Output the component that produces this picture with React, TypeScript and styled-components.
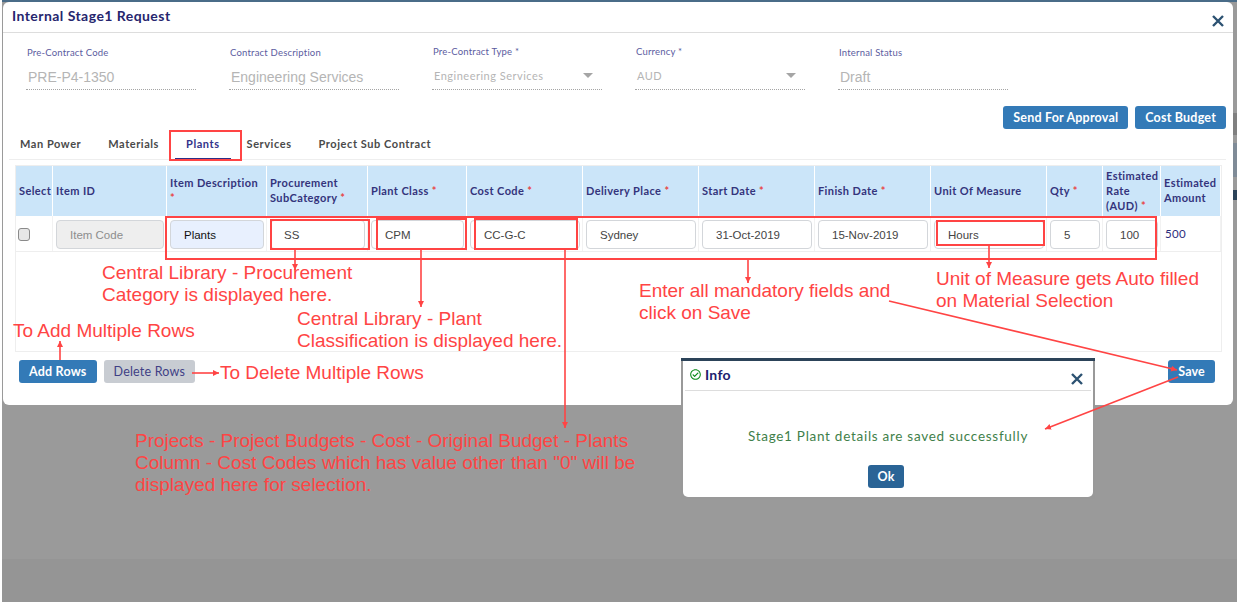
import * as React from "react";
import styled, { createGlobalStyle } from "styled-components";
import { FaRegCheckCircle } from "react-icons/fa";

const GlobalStyle = createGlobalStyle`
  html, body {
    margin: 0;
    padding: 0;
    background: #fff;
  }
  * {
    box-sizing: border-box;
  }
`;

const RED = "#ff4444";
const UI_FONT = `Lato, "Open Sans", sans-serif`;
const VALUE_FONT = `"Liberation Sans", Arial, sans-serif`;

const Page = styled.div`
  position: relative;
  width: 1237px;
  height: 602px;
  overflow: hidden;
  padding-left: 2px;
  font-family: ${UI_FONT};
`;

const Backdrop = styled.div`
  height: 602px;
  padding: 2px 4px 0 1px;
  background: linear-gradient(#4a6c88 0 2px, #9a9a9a 2px 559px, #959595 559px);
`;

// bits of the page behind the modal that show in the gap on the right
const RightEdge = styled.div`
  position: absolute;
  right: 0;
  top: 0;
  width: 4px;
  height: 210px;
  background: linear-gradient(
    #4a6c88 0 2px,
    #9a9a9a 2px 113px,
    #808080 113px 135px,
    #9a9a9a 135px 143px,
    #7f8b97 143px 177px,
    #9a9a9a 177px 190px,
    #2c4359 190px 200px,
    #9a9a9a 200px
  );
`;

const Modal = styled.div`
  position: relative;
  height: 403px;
  background: #fff;
  border-radius: 6px;
`;

const ModalHeader = styled.div`
  height: 31px;
  display: flex;
  align-items: center;
  justify-content: space-between;
  padding: 0 9px 0 9px;
  border-bottom: 1px solid #ddd;
`;

const ModalTitle = styled.div`
  font-size: 14px;
  font-weight: 700;
  letter-spacing: 0.45px;
  color: #26266e;
  margin-top: -4px;
`;

const CloseIcon = styled.svg<{ $size: number; $drop: number }>`
  width: ${(p) => p.$size}px;
  height: ${(p) => p.$size}px;
  margin-top: ${(p) => p.$drop}px;
  stroke: #2c5272;
  stroke-width: 2.4;
  fill: none;
`;

const FieldRow = styled.div`
  display: flex;
  gap: 33px;
  margin-top: 14px;
  padding-left: 23px;
`;

const Field = styled.div`
  position: relative;
  width: 170px;
  height: 43px;
  padding-left: 1px;
  border-bottom: 1px dotted #a5a5a5;
`;

const FieldLabel = styled.div<{ $raised?: boolean }>`
  font-size: 9.5px;
  line-height: 12px;
  letter-spacing: 0.2px;
  color: #5c5ca0;
  margin-top: ${(p) => (p.$raised ? "-1px" : "0")};
`;

const FieldValue = styled.div<{ $select?: boolean }>`
  font-family: ${(p) => (p.$select ? UI_FONT : VALUE_FONT)};
  font-size: ${(p) => (p.$select ? "11px" : "14px")};
  letter-spacing: ${(p) => (p.$select ? "0.5px" : "0")};
  line-height: 16px;
  color: #b5b5b5;
  margin-top: 10px;
  padding-left: 1px;
`;

const Caret = styled.span`
  position: absolute;
  right: 9px;
  top: 26px;
  border-left: 5px solid transparent;
  border-right: 5px solid transparent;
  border-top: 5px solid #a5a5a5;
`;

const ActionRow = styled.div`
  display: flex;
  justify-content: flex-end;
  gap: 7px;
  margin-top: 16px;
  padding-right: 7px;
`;

const Button = styled.div<{ $variant?: "primary" | "muted" | "dark" }>`
  height: 23px;
  display: inline-flex;
  align-items: center;
  justify-content: center;
  padding: 0 ${(p) => (p.$variant === "dark" ? "9px" : "10px")};
  border-radius: 3px;
  font-size: 12.5px;
  font-weight: ${(p) => (p.$variant === "muted" ? 400 : 700)};
  letter-spacing: 0.2px;
  color: ${(p) => (p.$variant === "muted" ? "#3f3f85" : "#fff")};
  background: ${(p) =>
    p.$variant === "muted"
      ? "#c8ccd2"
      : p.$variant === "dark"
        ? "#2a6496"
        : "#337ab7"};
`;

const Tabs = styled.div`
  display: flex;
  gap: 5px;
  height: 29px;
  margin: 2px 7px 0 6px;
  border-bottom: 1px solid #eee;
`;

const Tab = styled.div<{ $active?: boolean }>`
  padding: 0 11px;
  height: 28px;
  line-height: 26px;
  font-size: 11px;
  font-weight: 700;
  letter-spacing: 0.56px;
  color: ${(p) => (p.$active ? "#33338a" : "#4a4a4a")};
  border-bottom: 1px solid ${(p) => (p.$active ? "#2e2e86" : "transparent")};
`;

const TableFrame = styled.div`
  height: 187px;
  margin: 5px 11px 0 12px;
  border: 1px solid #eee;
`;

const COLUMNS = "37px 114px 100px 101px 99px 116px 116px 116px 116px 116px 56px 58px 60px";

const HeadRow = styled.div`
  display: grid;
  grid-template-columns: ${COLUMNS};
  height: 50px;
`;

const HeadCell = styled.div`
  display: flex;
  align-items: center;
  padding: 0 0 2px 3px;
  background: #cbe5f9;
  border-right: 1px solid #fff;
  font-size: 11px;
  font-weight: 700;
  line-height: 15px;
  letter-spacing: 0.4px;
  color: #34347c;
`;

const Star = styled.span`
  color: #e84545;
`;

const BodyRow = styled.div`
  display: grid;
  grid-template-columns: ${COLUMNS};
  height: 36px;
  border-bottom: 1px solid #eee;
`;

const BodyCell = styled.div`
  display: flex;
  align-items: flex-start;
  padding: 4px 2px 0 3px;
  border-right: 1px solid #f2f2f2;
`;

const Checkbox = styled.div`
  width: 12px;
  height: 13px;
  margin: 8px 0 0 -1px;
  border: 1px solid #8a8a8a;
  border-radius: 3px;
  background: #e6e6e6;
`;

const InputBox = styled.div<{ $tone?: "disabled" | "filled" | "plain" }>`
  width: 100%;
  height: 29px;
  line-height: 29px;
  padding-left: 13px;
  border: 1px solid #d3d6da;
  border-radius: 4px;
  font-family: ${VALUE_FONT};
  font-size: 11.5px;
  color: ${(p) => (p.$tone === "disabled" ? "#8d8d8d" : p.$tone === "filled" ? "#111" : "#444")};
  background: ${(p) => (p.$tone === "disabled" ? "#eeeeee" : p.$tone === "filled" ? "#e8f0fe" : "#fff")};
`;

const AmountText = styled.div`
  margin-top: 7px;
  padding-left: 1px;
  font-size: 11.5px;
  letter-spacing: 0.3px;
  color: #2d2d7d;
`;

const Footer = styled.div`
  display: flex;
  justify-content: space-between;
  margin-top: 8px;
  padding: 0 18px 0 16px;
`;

const FooterLeft = styled.div`
  display: flex;
  gap: 7px;
`;

const InfoDialog = styled.div`
  position: absolute;
  left: 681px;
  top: 358px;
  width: 414px;
  height: 141px;
  padding: 3px 2px 2px;
  background: linear-gradient(#2c4359 0 3px, #999 3px);
`;

const InfoPanel = styled.div`
  height: 100%;
  display: flex;
  flex-direction: column;
  background: #fff;
  border-radius: 0 0 5px 5px;
`;

const InfoHeader = styled.div`
  height: 30px;
  margin: 0 2px;
  display: flex;
  align-items: center;
  justify-content: space-between;
  padding: 0 8px 0 5px;
  border-bottom: 1px solid #ddd;
`;

const InfoTitle = styled.div`
  display: flex;
  align-items: center;
  gap: 4px;
  margin-top: -3px;
  font-size: 14px;
  font-weight: 700;
  letter-spacing: 0.3px;
  color: #20206e;
  svg {
    color: #0b8a1a;
    font-size: 11px;
  }
`;

const InfoMessage = styled.div`
  margin-top: 37px;
  text-align: center;
  font-size: 13.5px;
  letter-spacing: 0.72px;
  color: #3f7f4a;
`;

const InfoActions = styled.div`
  display: flex;
  justify-content: center;
  margin-top: 21px;
  padding-right: 4px;
`;

const Annotations = styled.svg`
  position: absolute;
  left: 0;
  top: 0;
  pointer-events: none;
`;

const Note = styled.div<{ $x: number; $y: number }>`
  position: absolute;
  left: ${(p) => p.$x}px;
  top: ${(p) => p.$y}px;
  font-family: ${VALUE_FONT};
  font-size: 19px;
  line-height: 22px;
  white-space: nowrap;
  color: ${RED};
`;

const Close = ({ size, drop }: { size: number; drop: number }) => (
  <CloseIcon $size={size} $drop={drop} viewBox="0 0 12 12">
    <path d="M1 1l10 10M11 1L1 11" />
  </CloseIcon>
);

const fields = [
  { label: "Pre-Contract Code", value: "PRE-P4-1350" },
  { label: "Contract Description", value: "Engineering Services" },
  { label: "Pre-Contract Type *", value: "Engineering Services", select: true },
  { label: "Currency *", value: "AUD", select: true },
  { label: "Internal Status", value: "Draft" },
];

const tabs = ["Man Power", "Materials", "Plants", "Services", "Project Sub Contract"];

const boxes = [
  { x: 170, y: 131, w: 71, h: 29 },
  { x: 166, y: 217, w: 990, h: 42 },
  { x: 271, y: 220, w: 98, h: 29 },
  { x: 377, y: 219, w: 89, h: 30 },
  { x: 475, y: 219, w: 102, h: 30 },
  { x: 937, y: 221, w: 107, h: 24 },
];

const arrows = [
  "M295 249V270",
  "M421 249V307",
  "M565 249V428",
  "M748 259V283",
  "M989 245V268",
  "M60 360V341",
  "M192 373H219",
  "M889 301L1177 370",
  "M1178 377L1045 429",
];

export default function App() {
  return (
    <Page>
      <GlobalStyle />
      <Backdrop>
        <Modal>
          <ModalHeader>
            <ModalTitle>Internal Stage1 Request</ModalTitle>
            <Close size={12} drop={8} />
          </ModalHeader>
          <FieldRow>
            {fields.map((f) => (
              <Field key={f.label}>
                <FieldLabel $raised={f.select}>{f.label}</FieldLabel>
                <FieldValue $select={f.select}>{f.value}</FieldValue>
                {f.select && <Caret />}
              </Field>
            ))}
          </FieldRow>
          <ActionRow>
            <Button>Send For Approval</Button>
            <Button>Cost Budget</Button>
          </ActionRow>
          <Tabs>
            {tabs.map((t) => (
              <Tab key={t} $active={t === "Plants"}>
                {t}
              </Tab>
            ))}
          </Tabs>
          <TableFrame>
            <HeadRow>
              <HeadCell>Select</HeadCell>
              <HeadCell>Item ID</HeadCell>
              <HeadCell>
                <div>
                  Item Description <Star>*</Star>
                </div>
              </HeadCell>
              <HeadCell>
                <div>
                  Procurement SubCategory <Star>*</Star>
                </div>
              </HeadCell>
              <HeadCell>
                <div>
                  Plant Class <Star>*</Star>
                </div>
              </HeadCell>
              <HeadCell>
                <div>
                  Cost Code <Star>*</Star>
                </div>
              </HeadCell>
              <HeadCell>
                <div>
                  Delivery Place <Star>*</Star>
                </div>
              </HeadCell>
              <HeadCell>
                <div>
                  Start Date <Star>*</Star>
                </div>
              </HeadCell>
              <HeadCell>
                <div>
                  Finish Date <Star>*</Star>
                </div>
              </HeadCell>
              <HeadCell>Unit Of Measure</HeadCell>
              <HeadCell>
                <div>
                  Qty <Star>*</Star>
                </div>
              </HeadCell>
              <HeadCell>
                <div>
                  Estimated Rate (AUD) <Star>*</Star>
                </div>
              </HeadCell>
              <HeadCell>Estimated Amount</HeadCell>
            </HeadRow>
            <BodyRow>
              <BodyCell>
                <Checkbox />
              </BodyCell>
              <BodyCell>
                <InputBox $tone="disabled">Item Code</InputBox>
              </BodyCell>
              <BodyCell>
                <InputBox $tone="filled">Plants</InputBox>
              </BodyCell>
              <BodyCell>
                <InputBox>SS</InputBox>
              </BodyCell>
              <BodyCell>
                <InputBox>CPM</InputBox>
              </BodyCell>
              <BodyCell>
                <InputBox>CC-G-C</InputBox>
              </BodyCell>
              <BodyCell>
                <InputBox>Sydney</InputBox>
              </BodyCell>
              <BodyCell>
                <InputBox>31-Oct-2019</InputBox>
              </BodyCell>
              <BodyCell>
                <InputBox>15-Nov-2019</InputBox>
              </BodyCell>
              <BodyCell>
                <InputBox>Hours</InputBox>
              </BodyCell>
              <BodyCell>
                <InputBox>5</InputBox>
              </BodyCell>
              <BodyCell>
                <InputBox>100</InputBox>
              </BodyCell>
              <BodyCell>
                <AmountText>500</AmountText>
              </BodyCell>
            </BodyRow>
          </TableFrame>
          <Footer>
            <FooterLeft>
              <Button>Add Rows</Button>
              <Button $variant="muted">Delete Rows</Button>
            </FooterLeft>
            <Button>Save</Button>
          </Footer>
        </Modal>
      </Backdrop>
      <RightEdge />

      <InfoDialog>
        <InfoPanel>
          <InfoHeader>
            <InfoTitle>
              <FaRegCheckCircle />
              Info
            </InfoTitle>
            <Close size={12} drop={6} />
          </InfoHeader>
          <InfoMessage>Stage1 Plant details are saved successfully</InfoMessage>
          <InfoActions>
            <Button $variant="dark">Ok</Button>
          </InfoActions>
        </InfoPanel>
      </InfoDialog>

      <Note $x={102} $y={262}>
        Central Library - Procurement
        <br />
        Category is displayed here.
      </Note>
      <Note $x={13} $y={320}>
        To Add Multiple Rows
      </Note>
      <Note $x={297} $y={308}>
        Central Library - Plant
        <br />
        Classification is displayed here.
      </Note>
      <Note $x={220} $y={362}>
        To Delete Multiple Rows
      </Note>
      <Note $x={135} $y={430}>
        Projects - Project Budgets - Cost - Original Budget - Plants
        <br />
        Column - Cost Codes which has value other than "0" will be
        <br />
        displayed here for selection.
      </Note>
      <Note $x={639} $y={280}>
        Enter all mandatory fields and
        <br />
        click on Save
      </Note>
      <Note $x={936} $y={268}>
        Unit of Measure gets Auto filled
        <br />
        on Material Selection
      </Note>

      <Annotations width={1237} height={602}>
        <defs>
          <marker id="head" markerWidth="8" markerHeight="8" refX="6" refY="3" orient="auto" markerUnits="userSpaceOnUse">
            <path d="M0 0L6 3L0 6z" fill={RED} />
          </marker>
        </defs>
        {boxes.map((b) => (
          <rect key={`${b.x}-${b.y}`} x={b.x} y={b.y} width={b.w} height={b.h} fill="none" stroke={RED} strokeWidth={2} />
        ))}
        {arrows.map((d) => (
          <path key={d} d={d} stroke={RED} strokeWidth={1.6} fill="none" markerEnd="url(#head)" />
        ))}
      </Annotations>
    </Page>
  );
}
